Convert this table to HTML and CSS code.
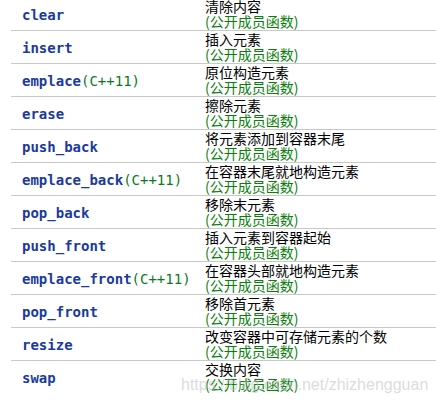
FILE: index.html
```html
<!DOCTYPE html>
<html>
<head>
<meta charset="utf-8">
<link rel="stylesheet" href="styles.css">
</head>
<body>
<div class="list">
  <div class="row"><div class="name">clear</div><div class="desc"><div>清除内容</div><div class="kind">(公开成员函数)</div></div></div>
  <div class="row"><div class="name">insert</div><div class="desc"><div>插入元素</div><div class="kind">(公开成员函数)</div></div></div>
  <div class="row"><div class="name">emplace<span class="rev">(C++11)</span></div><div class="desc"><div>原位构造元素</div><div class="kind">(公开成员函数)</div></div></div>
  <div class="row"><div class="name">erase</div><div class="desc"><div>擦除元素</div><div class="kind">(公开成员函数)</div></div></div>
  <div class="row"><div class="name">push_back</div><div class="desc"><div>将元素添加到容器末尾</div><div class="kind">(公开成员函数)</div></div></div>
  <div class="row"><div class="name">emplace_back<span class="rev">(C++11)</span></div><div class="desc"><div>在容器末尾就地构造元素</div><div class="kind">(公开成员函数)</div></div></div>
  <div class="row"><div class="name">pop_back</div><div class="desc"><div>移除末元素</div><div class="kind">(公开成员函数)</div></div></div>
  <div class="row"><div class="name">push_front</div><div class="desc"><div>插入元素到容器起始</div><div class="kind">(公开成员函数)</div></div></div>
  <div class="row"><div class="name">emplace_front<span class="rev">(C++11)</span></div><div class="desc"><div>在容器头部就地构造元素</div><div class="kind">(公开成员函数)</div></div></div>
  <div class="row"><div class="name">pop_front</div><div class="desc"><div>移除首元素</div><div class="kind">(公开成员函数)</div></div></div>
  <div class="row"><div class="name">resize</div><div class="desc"><div>改变容器中可存储元素的个数</div><div class="kind">(公开成员函数)</div></div></div>
  <div class="row"><div class="name">swap</div><div class="desc"><div>交换内容</div><div class="kind">(公开成员函数)</div></div></div>
</div>
<div class="watermark">https://blog.csdn.net/zhizhengguan</div>
</body>
</html>
```

FILE: styles.css
```css
html, body {
  margin: 0;
  padding: 0;
  background: #fff;
  overflow: hidden;
}
body {
  position: relative;
  width: 436px;
  height: 405px;
}
.list {
  margin-top: -3px;
  margin-left: 11px;
  display: flex;
  flex-direction: column;
}
.row {
  display: grid;
  grid-template-columns: 194px 1fr;
  height: 32px;
  border-top: 1px solid #c8c8c8;
}
.name {
  display: flex;
  align-items: center;
  padding-left: 11px;
  padding-top: 2px;
  font-family: "DejaVu Sans Mono", monospace;
  font-weight: bold;
  font-size: 14px;
  color: #1a3a9e;
  white-space: nowrap;
}
.rev {
  font-weight: normal;
  color: #0b7a1e;
}
.desc {
  font-family: "Noto Sans CJK SC", sans-serif;
  font-size: 14px;
  line-height: 15px;
  color: #000;
  padding-top: 1px;
  white-space: nowrap;
}
.kind {
  color: #0a800a;
}
.watermark {
  position: absolute;
  left: 181px;
  top: 375px;
  font-family: "Liberation Sans", Arial, sans-serif;
  font-size: 16px;
  line-height: 20px;
  color: rgba(190, 190, 190, 0.55);
  white-space: nowrap;
}
```
